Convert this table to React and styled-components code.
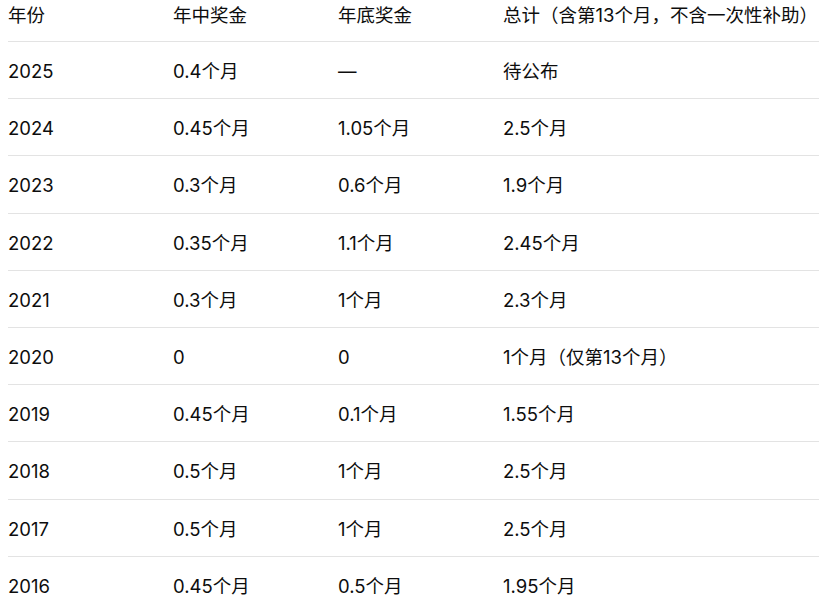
import React from "react";
import styled, { createGlobalStyle } from "styled-components";

const GlobalStyle = createGlobalStyle`
  body {
    margin: 0;
    background: #ffffff;
    font-family: Inter, "Noto Sans CJK SC", sans-serif;
    color: #0d0d0d;
    overflow: hidden;
  }
`;

const Wrap = styled.div`
  padding-left: 8px;
`;

const Table = styled.table`
  width: 100%;
  border-collapse: collapse;
  font-size: 18.5px;
  line-height: 24px;
`;

const Head = styled.th`
  text-align: left;
  font-weight: 400;
  padding: 3px 0 14px;
  width: ${(props) => props.width || "auto"};
  white-space: nowrap;
  border-bottom: 1px solid #e3e3e3;
`;

const Row = styled.tr`
  border-bottom: 1px solid #e3e3e3;
`;

const Cell = styled.td`
  padding: 17px 0 15.2px;
  white-space: nowrap;
`;

const rows = [
  ["2025", "0.4个月", "—", "待公布"],
  ["2024", "0.45个月", "1.05个月", "2.5个月"],
  ["2023", "0.3个月", "0.6个月", "1.9个月"],
  ["2022", "0.35个月", "1.1个月", "2.45个月"],
  ["2021", "0.3个月", "1个月", "2.3个月"],
  ["2020", "0", "0", "1个月（仅第13个月）"],
  ["2019", "0.45个月", "0.1个月", "1.55个月"],
  ["2018", "0.5个月", "1个月", "2.5个月"],
  ["2017", "0.5个月", "1个月", "2.5个月"],
  ["2016", "0.45个月", "0.5个月", "1.95个月"],
];

export default function App() {
  return (
    <Wrap>
      <GlobalStyle />
      <Table>
        <thead>
          <tr>
            <Head width="165px">年份</Head>
            <Head width="165px">年中奖金</Head>
            <Head width="165px">年底奖金</Head>
            <Head>总计（含第13个月，不含一次性补助）</Head>
          </tr>
        </thead>
        <tbody>
          {rows.map((r) => (
            <Row key={r[0]}>
              {r.map((c, i) => (
                <Cell key={i}>{c}</Cell>
              ))}
            </Row>
          ))}
        </tbody>
      </Table>
    </Wrap>
  );
}
